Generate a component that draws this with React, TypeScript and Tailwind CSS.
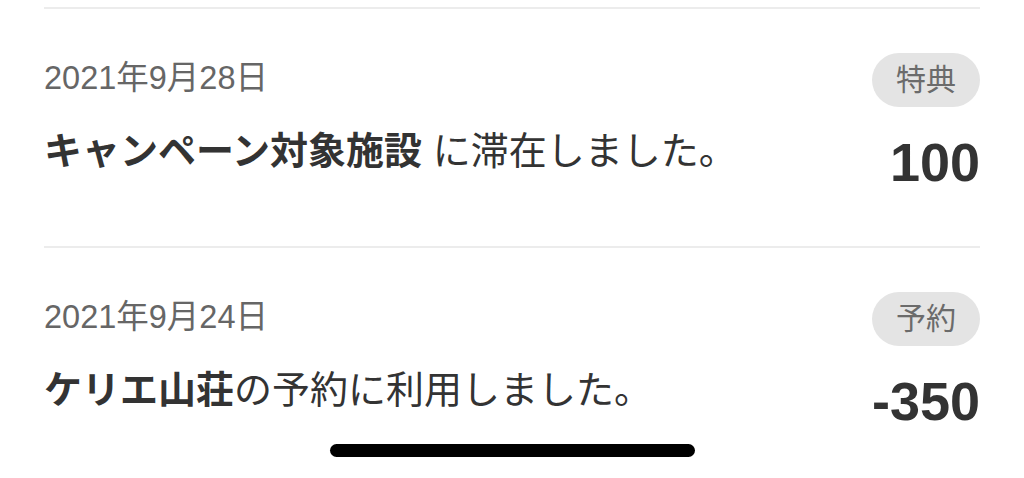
const font = {
  fontFamily: '"Liberation Sans", "Noto Sans CJK JP", sans-serif',
};

type Entry = {
  date: string;
  strong: string;
  rest: string;
  tag: string;
  amount: string;
};

const entries: Entry[] = [
  {
    date: "2021年9月28日",
    strong: "キャンペーン対象施設",
    rest: " に滞在しました。",
    tag: "特典",
    amount: "100",
  },
  {
    date: "2021年9月24日",
    strong: "ケリエ山荘",
    rest: "の予約に利用しました。",
    tag: "予約",
    amount: "-350",
  },
];

function Row({ entry }: { entry: Entry }) {
  return (
    <div className="border-t-2 border-[#ececec] pt-[44px] pb-[57px] flex justify-between">
      <div className="flex flex-col">
        <div className="mt-[9px] text-[32.5px] leading-none text-[#666666]">{entry.date}</div>
        <div className="mt-[37px] text-[38px] leading-none text-[#333333] whitespace-nowrap">
          <span className="font-bold">{entry.strong}</span>
          {entry.rest}
        </div>
      </div>
      <div className="flex flex-col items-end">
        <span className="h-[54px] px-[24px] rounded-full bg-[#e4e4e4] text-[#6b6b6b] text-[30px] leading-none flex items-center">
          {entry.tag}
        </span>
        <div className="mt-[28px] text-[54px] leading-none font-bold text-[#333333]">
          {entry.amount}
        </div>
      </div>
    </div>
  );
}

export default function App() {
  return (
    <div className="relative h-[478px] w-[1024px] overflow-hidden bg-white" style={font}>
      <div className="pt-[7px] px-[44px]">
        {entries.map((e) => (
          <Row key={e.date} entry={e} />
        ))}
      </div>
      <div className="absolute bottom-[21px] left-[330px] w-[365px] h-[13px] rounded-full bg-black" />
    </div>
  );
}
